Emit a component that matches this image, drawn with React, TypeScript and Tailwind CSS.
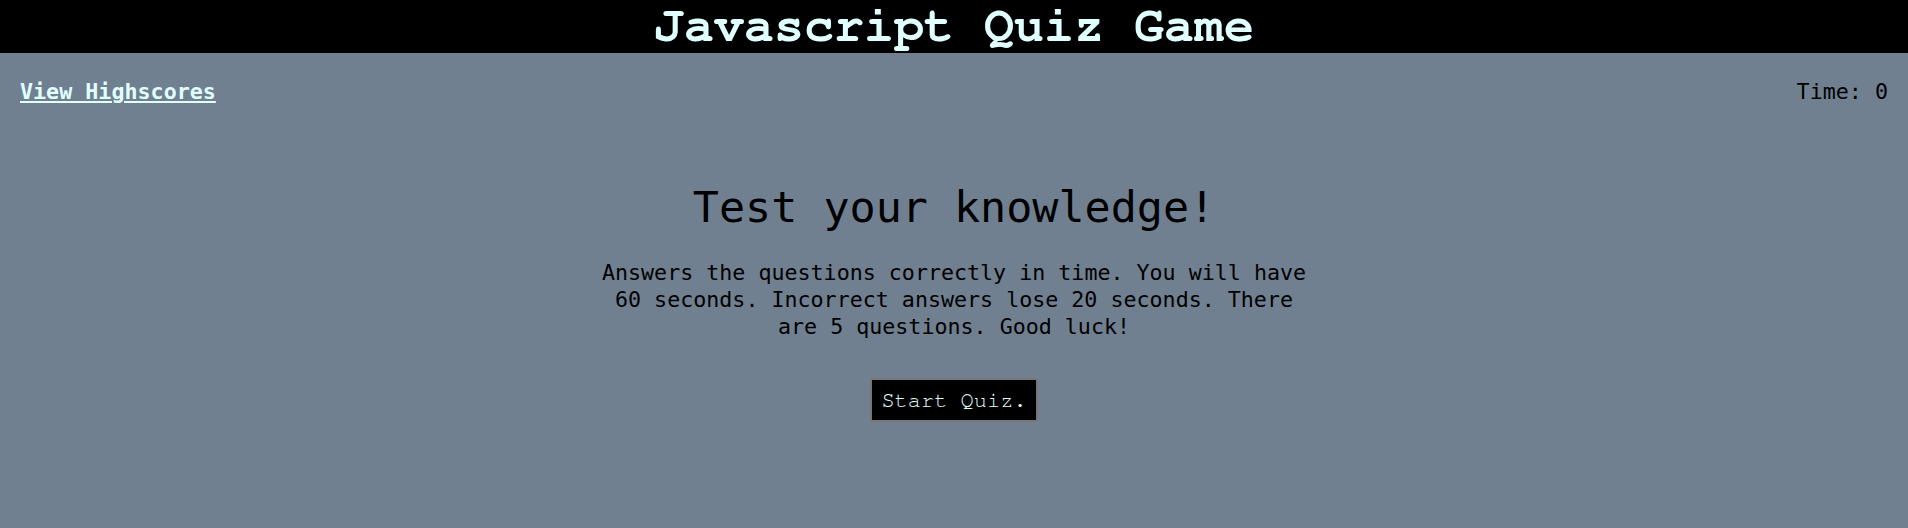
import React from "react";

const mono = "font-['DejaVu_Sans_Mono',monospace]";
const courier = "font-['Nimbus_Mono_PS','FreeMono','Courier','Liberation_Mono',monospace]";

export default function App() {
  return (
    <div className="min-h-[528px] bg-[#708090] text-black">
      <header className="h-[53px] bg-black text-center">
        <h1 className={`${courier} text-[50px] leading-[53px] font-bold text-[#e0ffff]`}>
          Javascript Quiz Game
        </h1>
      </header>

      <div className={`flex items-center justify-between px-[20px] pt-[26px] ${mono} text-[21.7px] leading-[26px]`}>
        <a href="#" className="font-bold text-[#e0ffff] underline">
          View Highscores
        </a>
        <span>Time: 0</span>
      </div>

      <main className={`flex flex-col items-center ${mono}`}>
        <h2 className="mt-[81px] text-[43.4px] leading-none">Test your knowledge!</h2>
        <p className="mt-[31px] w-[720px] text-center text-[21.66px] leading-[26.7px]">
          Answers the questions correctly in time. You will have 60 seconds. Incorrect answers
          lose 20 seconds. There are 5 questions. Good luck!
        </p>
        <button className={`mt-[37px] border-2 border-[#767676] bg-black px-[9px] py-[7px] ${courier} text-[22px] leading-[26px] text-[#e0ffff]`}>
          Start Quiz.
        </button>
      </main>
    </div>
  );
}
